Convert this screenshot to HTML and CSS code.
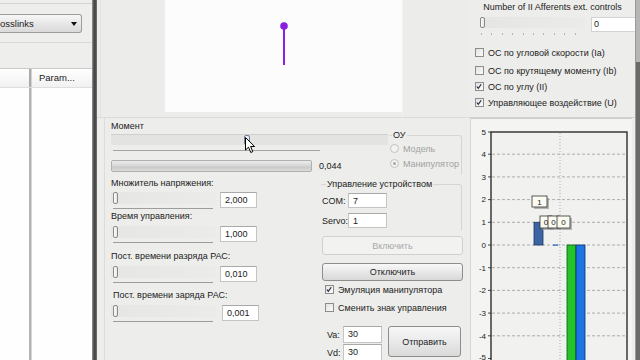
FILE: index.html
```html
<!DOCTYPE html>
<html lang="ru">
<head>
<meta charset="utf-8">
<title>Manipulator</title>
<link rel="stylesheet" href="styles.css">
</head>
<body>
<div class="app">
  <div class="left">
    <div class="topline"></div>
    <div class="combo"><span class="combo-text">osslinks</span><span class="combo-arrow"></span></div>
    <div class="lsep"></div>
    <div class="list">
      <div class="lhead"><div class="c1"></div><div class="c2">Param...</div></div>
      <div class="lbody"><div class="c1"></div><div class="c2"></div></div>
    </div>
  </div>
  <div class="splitter"></div>
  <div class="main">
    <div class="viewport">
      <div class="vp-side"></div>
      <div class="canvas">
        <svg width="237" height="110" viewBox="0 0 237 110">
          <line x1="119" y1="26" x2="119" y2="65" stroke="#8a1fe3" stroke-width="2"/>
          <circle cx="119" cy="26" r="3.8" fill="#8a1fe3"/>
        </svg>
      </div>
      <div class="vp-side2"></div>
    </div>
    <div class="controls">
      <div class="top-block">
        <div class="moment">
          <div class="lbl">Момент</div>
          <div class="mtrack"><div class="mthumb"></div></div>
          <div class="mticks"></div>
          <div class="prog-row"><div class="progress"></div><span class="pval">0,044</span></div>
        </div>
        <div class="group ou">
          <span class="glabel">ОУ</span>
          <div class="radio-row"><span class="radio"></span><span>Модель</span></div>
          <div class="radio-row"><span class="radio on"></span><span>Манипулятор</span></div>
        </div>
      </div>
      <div class="bottom-block">
        <div class="fields">
          <div class="lbl f1">Множитель напряжения:</div>
          <div class="frow r1"><div class="slider"><div class="sbar"><div class="sthumb"></div></div><div class="stick"></div></div><div class="tbox">2,000</div></div>
          <div class="lbl f2">Время управления:</div>
          <div class="frow r2"><div class="slider"><div class="sbar"><div class="sthumb"></div></div><div class="stick"></div></div><div class="tbox">1,000</div></div>
          <div class="lbl f3">Пост. времени разряда РАС:</div>
          <div class="frow r3"><div class="slider"><div class="sbar"><div class="sthumb"></div></div><div class="stick"></div></div><div class="tbox">0,010</div></div>
          <div class="lbl f4">Пост. времени заряда РАС:</div>
          <div class="frow r4"><div class="slider"><div class="sbar"><div class="sthumb"></div></div><div class="stick"></div></div><div class="tbox">0,001</div></div>
        </div>
        <div class="device">
          <div class="group dev">
            <span class="glabel">Управление устройством</span>
            <div class="drow"><span class="dlbl">COM:</span><div class="tbox dbox">7</div></div>
            <div class="drow servo"><span class="dlbl">Servo:</span><div class="tbox dbox">1</div></div>
          </div>
          <div class="btn disabled">Включить</div>
          <div class="btn off">Отключить</div>
          <div class="cb-row c1r"><span class="cb on"><svg width="9" height="9" viewBox="0 0 9 9"><path d="M2 4.5 L3.7 6.5 L7 2" fill="none" stroke="#223" stroke-width="1.3"/></svg></span><span>Эмуляция манипулятора</span></div>
          <div class="cb-row c2r"><span class="cb"></span><span>Сменить знак управления</span></div>
          <div class="send">
            <div class="vcol">
              <div class="vrow"><span class="vlbl">Va:</span><div class="tbox vbox">30</div></div>
              <div class="vrow vd"><span class="vlbl">Vd:</span><div class="tbox vbox">30</div></div>
            </div>
            <div class="btn sendbtn">Отправить</div>
          </div>
        </div>
      </div>
    </div>
  </div>
  <div class="right">
    <div class="rcontent">
      <div class="rtitle">Number of II Afferents ext. controls</div>
      <div class="rtrack-row">
        <div class="rtrack"><div class="rthumb"></div></div>
        <div class="rval">0</div>
      </div>
      <div class="rticks"></div>
      <div class="cb-row rc1"><span class="cb"></span><span>ОС по угловой скорости (Ia)</span></div>
      <div class="cb-row rc2"><span class="cb"></span><span>ОС по крутящему моменту (Ib)</span></div>
      <div class="cb-row rc3"><span class="cb on"><svg width="9" height="9" viewBox="0 0 9 9"><path d="M2 4.5 L3.7 6.5 L7 2" fill="none" stroke="#223" stroke-width="1.3"/></svg></span><span>ОС по углу (II)</span></div>
      <div class="cb-row rc4"><span class="cb on"><svg width="9" height="9" viewBox="0 0 9 9"><path d="M2 4.5 L3.7 6.5 L7 2" fill="none" stroke="#223" stroke-width="1.3"/></svg></span><span>Управляющее воздействие (U)</span></div>
      <div class="rsep"></div>
      <div class="chart">
        <svg width="162" height="242" viewBox="0 0 162 242" font-family="Liberation Sans, Arial, sans-serif" font-size="8" fill="#222">
          <rect x="21" y="14" width="136" height="232" fill="#f1f2f0" stroke="#1e1e1e" stroke-width="1.3"/>
          <g stroke="#9a9a9a" stroke-width="0.8" stroke-dasharray="3 2">
            <line x1="22" y1="36.2" x2="156" y2="36.2"/>
            <line x1="22" y1="58.9" x2="156" y2="58.9"/>
            <line x1="22" y1="81.6" x2="156" y2="81.6"/>
            <line x1="22" y1="104.3" x2="156" y2="104.3"/>
            <line x1="22" y1="127" x2="156" y2="127"/>
            <line x1="22" y1="149.7" x2="156" y2="149.7"/>
            <line x1="22" y1="172.4" x2="156" y2="172.4"/>
            <line x1="22" y1="195.1" x2="156" y2="195.1"/>
            <line x1="22" y1="217.8" x2="156" y2="217.8"/>
          </g>
          <line x1="90" y1="15" x2="90" y2="242" stroke="#9a9a9a" stroke-width="0.8" stroke-dasharray="1 2"/>
          <g stroke="#222" stroke-width="0.8">
            <line x1="18" y1="14" x2="21" y2="14"/>
            <line x1="18" y1="36.2" x2="21" y2="36.2"/>
            <line x1="18" y1="58.9" x2="21" y2="58.9"/>
            <line x1="18" y1="81.6" x2="21" y2="81.6"/>
            <line x1="18" y1="104.3" x2="21" y2="104.3"/>
            <line x1="18" y1="127" x2="21" y2="127"/>
            <line x1="18" y1="149.7" x2="21" y2="149.7"/>
            <line x1="18" y1="172.4" x2="21" y2="172.4"/>
            <line x1="18" y1="195.1" x2="21" y2="195.1"/>
            <line x1="18" y1="217.8" x2="21" y2="217.8"/>
            <line x1="18" y1="240.5" x2="21" y2="240.5"/>
          </g>
          <g text-anchor="end">
            <text x="16" y="16.5">5</text>
            <text x="16" y="39">4</text>
            <text x="16" y="61.7">3</text>
            <text x="16" y="84.4">2</text>
            <text x="16" y="107.1">1</text>
            <text x="16" y="129.8">0</text>
            <text x="16" y="152.5">-1</text>
            <text x="16" y="175.2">-2</text>
            <text x="16" y="197.9">-3</text>
            <text x="16" y="220.6">-4</text>
            <text x="16" y="242.3">-5</text>
          </g>
          <rect x="64" y="104.3" width="9" height="22.7" fill="#3b64a3" stroke="#1f3560" stroke-width="0.8"/>
          <rect x="83" y="126.4" width="5" height="1.4" fill="#3a6fd0"/>
          <rect x="97" y="127" width="9" height="116" fill="#22c42a" stroke="#0d5a10" stroke-width="0.8"/>
          <rect x="106" y="127" width="9" height="116" fill="#1d74e6" stroke="#0b2f66" stroke-width="0.8"/>
          <rect x="64" y="80" width="15" height="11" fill="#9a9a9a" opacity="0.7"/>
          <rect x="62" y="78" width="15" height="11" fill="#fbfbf1" stroke="#333" stroke-width="0.8"/>
          <text x="69.5" y="86.5" text-anchor="middle">1</text>
          <rect x="72" y="100" width="12" height="12" fill="#9a9a9a" opacity="0.7"/>
          <rect x="70" y="98" width="12" height="12" fill="#fbfbf1" stroke="#333" stroke-width="0.8"/>
          <text x="76" y="107" text-anchor="middle">0</text>
          <rect x="80" y="100" width="11" height="12" fill="#9a9a9a" opacity="0.7"/>
          <rect x="78" y="98" width="11" height="12" fill="#fbfbf1" stroke="#333" stroke-width="0.8"/>
          <text x="83.5" y="107" text-anchor="middle">0</text>
          <rect x="89" y="100" width="13" height="12" fill="#9a9a9a" opacity="0.7"/>
          <rect x="87" y="98" width="13" height="12" fill="#fbfbf1" stroke="#333" stroke-width="0.8"/>
          <text x="93.5" y="107" text-anchor="middle">0</text>
        </svg>
      </div>
    </div>
    <div class="scrollbar"><div class="sthumb-v"></div></div>
  </div>
  <svg class="cursor" width="12" height="18" viewBox="0 0 12 18">
    <path d="M0.5 0.5 L0.5 13 L3.5 10.2 L5.8 15.5 L7.8 14.6 L5.6 9.5 L9.6 9.5 Z" fill="#fff" stroke="#000" stroke-width="1"/>
  </svg>
</div>
</body>
</html>
```
FILE: styles.css
```css
* { box-sizing: border-box; }
html, body { margin: 0; padding: 0; }
body {
  width: 640px;
  height: 360px;
  overflow: hidden;
  background: #ededeb;
  font-family: "Liberation Sans", Arial, sans-serif;
  font-size: 9px;
  color: #222;
}
.app {
  position: relative;
  display: flex;
  width: 640px;
  height: 360px;
}

/* left panel */
.left {
  width: 92px;
  height: 360px;
  display: flex;
  flex-direction: column;
  background: #eeeeec;
}
.topline { height: 4px; border-bottom: 1px solid #d4d4d2; flex: none; }
.combo {
  flex: none;
  margin-top: 10px;
  width: 82px;
  height: 19px;
  border: 1px solid #9c9c9c;
  border-left: none;
  border-radius: 0 3px 3px 0;
  background: linear-gradient(#f7f7f7, #e6e6e6 55%, #dadada);
  display: flex;
  align-items: center;
  justify-content: space-between;
  padding-right: 4px;
}
.combo-text { font-size: 9.5px; color: #222; }
.combo-arrow {
  width: 0; height: 0;
  border-left: 3px solid transparent;
  border-right: 3px solid transparent;
  border-top: 4px solid #111;
}
.lsep { flex: none; height: 10px; border-bottom: 1px solid #dadad8; }
.list {
  flex: 1;
  margin-top: 25px;
  display: flex;
  flex-direction: column;
  border-top: 1px solid #c9c9c9;
  background: #fff;
}
.lhead {
  height: 19px;
  display: flex;
  border-bottom: 1px solid #dedede;
  background: linear-gradient(#ffffff, #f1f1f1);
}
.lbody { flex: 1; display: flex; background: #fdfefd; }
.c1 { width: 31px; border-right: 2px solid #a9a9a9; }
.c2 { flex: 1; border-left: 1px solid #d4d4d4; padding-left: 7px; line-height: 18px; font-size: 9.5px; color: #222; }
.lbody .c1 { border-right-color: #b4b4b4; }

.splitter {
  width: 5px;
  height: 360px;
  background: linear-gradient(90deg, #9a9a9a, #505050 35%, #3f3f3f 60%, #777);
}

/* main */
.main {
  width: 373px;
  height: 360px;
  display: flex;
  flex-direction: column;
}
.viewport {
  height: 118px;
  flex: none;
  display: flex;
  border-bottom: 1px solid #dcdcda;
  background: #ececea;
}
.vp-side { width: 65px; border-left: 1px solid #e3e3e1; margin-left: 3px; }
.canvas { width: 237px; height: 112px; background: #fbfcfb; }
.canvas svg { display: block; }
.vp-side2 { flex: 1; border-left: 1px solid #f2f2f0; }

.controls {
  flex: 1;
  margin-left: 7px;
  border-left: 1px solid #dcdcda;
  padding-left: 6px;
  display: flex;
  flex-direction: column;
}
.lbl { height: 10px; line-height: 10px; white-space: nowrap; }
.top-block { display: flex; height: 60px; flex: none; }
.moment { width: 277px; display: flex; flex-direction: column; }
.moment .lbl { margin-top: 3px; }
.mtrack {
  margin-top: 3px;
  height: 11px;
  background: #e3e3e1;
  border-top: 1px solid #d0d0ce;
  display: flex;
}
.mthumb {
  margin-left: 133px;
  width: 6px;
  height: 10px;
  border: 1px solid #6f7f98;
  border-radius: 2px;
  background: linear-gradient(90deg, #ffffff, #dfe4ee);
}
.mticks { margin-top: 5px; margin-left: 2px; width: 207px; height: 1px; background: #a4a4a4; }
.prog-row { margin-top: 9px; display: flex; align-items: center; height: 12px; }
.progress {
  width: 201px;
  height: 12px;
  border: 1px solid #b0b0b0;
  border-radius: 2px;
  background: linear-gradient(#ececec, #d6d6d6 50%, #cacaca 60%, #dcdcdc);
}
.pval { margin-left: 7px; }

.group { position: relative; border: 1px solid #d6d6d4; border-radius: 3px; }
.glabel {
  position: absolute;
  top: -6px;
  left: 3px;
  line-height: 10px;
  padding: 0 1px;
  background: #ededeb;
  white-space: nowrap;
}
.ou {
  margin-top: 17px;
  width: 74px;
  height: 41px;
  padding: 8px 0 0 1px;
  color: #a2a2a2;
  border-left-color: transparent;
  border-bottom-color: transparent;
}
.ou .glabel { color: #222; left: 3px; }
.radio-row { display: flex; align-items: center; height: 9px; margin-bottom: 6px; }
.radio {
  width: 9px; height: 9px;
  border-radius: 50%;
  border: 1px solid #c2c2c2;
  background: #f3f3f2;
  margin-right: 4px;
  display: flex;
  align-items: center;
  justify-content: center;
}
.radio.on::after { content: ""; width: 3px; height: 3px; border-radius: 50%; background: #a8a8a8; }

.bottom-block { display: flex; flex: 1; }
.fields { width: 209px; display: flex; flex-direction: column; }
.frow { display: flex; height: 17px; flex: none; }
.slider { width: 105px; display: flex; flex-direction: column; }
.sbar { height: 12px; display: flex; background: linear-gradient(90deg, #e6e6e4, #ebebea); }
.sthumb {
  margin-left: 2px;
  width: 5px;
  height: 12px;
  border: 1px solid #8a8a8a;
  border-radius: 2px;
  background: linear-gradient(90deg, #fff, #e4e4e4);
}
.stick { margin-top: 4px; margin-left: 2px; width: 100px; height: 1px; background: #9d9d9d; }
.tbox {
  margin-left: 4px;
  width: 37px;
  height: 16px;
  border: 1px solid #c4c4c4;
  border-top-color: #a9a9a9;
  background: #fff;
  padding-left: 4px;
  line-height: 14px;
  color: #222;
}
.f1 { margin-top: 0; }
.r1 { margin-top: 4px; }
.f2 { margin-top: 2px; }
.r2 { margin-top: 5px; }
.f3 { margin-top: 8px; }
.r3 { margin-top: 5px; }
.f4 { margin-top: 7px; padding-left: 2px; }
.r4 { margin-top: 5px; }
.r4 .tbox { margin-left: 6px; }

.device { width: 142px; display: flex; flex-direction: column; }
.dev {
  margin-top: 6px;
  height: 48px;
  border-left-color: transparent;
  border-bottom-color: transparent;
  padding-top: 8px;
}
.dev .glabel { left: 5px; }
.drow { display: flex; align-items: center; height: 15px; }
.drow.servo { margin-top: 5px; }
.dlbl { width: 27px; padding-left: 1px; }
.dbox { margin-left: 0; width: 39px; height: 15px; }
.btn {
  display: flex;
  align-items: center;
  justify-content: center;
  border-radius: 3px;
  color: #222;
}
.btn.disabled {
  margin-top: 4px;
  margin-left: 2px;
  width: 141px;
  height: 19px;
  border: 1px solid #d0d0ce;
  background: #f2f2f1;
  color: #a9a9a9;
}
.btn.off {
  margin-top: 8px;
  margin-left: 2px;
  width: 141px;
  height: 18px;
  border: 1px solid #8d8d8d;
  background: linear-gradient(#f8f8f8, #e8e8e8 50%, #d8d8d8);
}
.cb-row { display: flex; align-items: center; height: 9px; white-space: nowrap; }
.cb {
  width: 9px; height: 9px;
  border: 1px solid #8d8d8d;
  background: linear-gradient(135deg, #e2e2e2, #fbfbfb);
  margin-right: 4px;
  flex: none;
  display: flex;
}
.cb svg { display: block; margin: -1px 0 0 -1px; }
.c1r { margin-top: 4px; margin-left: 5px; }
.c2r { margin-top: 9px; margin-left: 5px; }
.send { margin-top: 14px; display: flex; }
.vcol { display: flex; flex-direction: column; margin-left: 7px; }
.vrow { display: flex; align-items: center; height: 17px; }
.vrow.vd { margin-top: 1px; }
.vlbl { width: 16px; }
.vbox { margin-left: 0; width: 39px; height: 17px; line-height: 15px; }
.sendbtn {
  margin-left: 6px;
  width: 73px;
  height: 31px;
  border: 1px solid #8d8d8d;
  background: linear-gradient(#f8f8f8, #e9e9e9 50%, #d9d9d9);
}

/* right panel */
.right { width: 170px; height: 360px; display: flex; }
.rcontent { width: 165px; display: flex; flex-direction: column; }
.rtitle { margin-top: 2px; height: 10px; line-height: 10px; text-align: center; white-space: nowrap; }
.rtrack-row { margin-top: 5px; display: flex; height: 15px; }
.rtrack {
  margin-left: 10px;
  width: 105px;
  height: 11px;
  display: flex;
  background: linear-gradient(90deg, #e5e5e3, #ebebe9);
}
.rthumb {
  width: 5px; height: 11px;
  border: 1px solid #8a8a8a;
  border-radius: 2px;
  background: linear-gradient(90deg, #fff, #e4e4e4);
}
.rval {
  margin-left: 6px;
  flex: 1;
  height: 15px;
  border: 1px solid #d2d2d0;
  border-right: none;
  background: #fff;
  padding-left: 2px;
  line-height: 13px;
}
.rticks {
  margin-top: 1px;
  margin-left: 11px;
  width: 104px;
  height: 2px;
  background: repeating-linear-gradient(90deg, #b5b5b5 0 1px, transparent 1px 10.4px);
}
.rc1 { margin-top: 13px; margin-left: 5px; }
.rc2 { margin-top: 9px; margin-left: 5px; }
.rc3 { margin-top: 7px; margin-left: 5px; }
.rc4 { margin-top: 7px; margin-left: 5px; }
.rsep { margin-top: 8px; height: 3px; border-bottom: 1px solid #d2d2d0; }
.chart {
  margin-top: 0;
  width: 162px;
  flex: 1;
  border-left: 1px solid #d6d6d4;
  border-top: 1px solid #cfcfcd;
  background: #f4f4f2;
  overflow: hidden;
}
.chart svg { display: block; margin: -1px 0 0 -1px; }
.scrollbar { width: 5px; height: 360px; background: #6a6a6a; border-left: 1px solid #9a9a9a; }
.sthumb-v { height: 62px; background: #b6b6b6; }

.cursor { position: absolute; left: 245px; top: 137px; }
```
